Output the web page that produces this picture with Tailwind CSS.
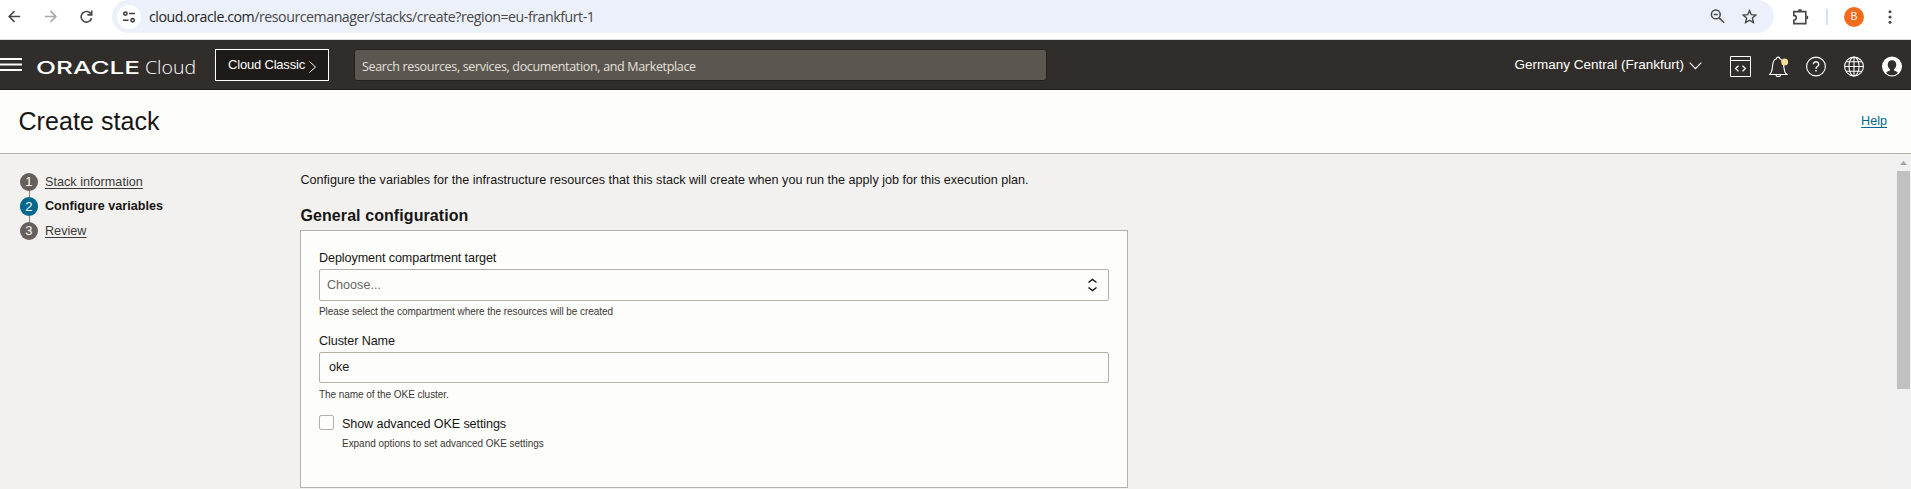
<!DOCTYPE html>
<html lang="en">
<head>
<meta charset="utf-8">
<title>Create stack</title>
<script src="https://cdn.jsdelivr.net/npm/@tailwindcss/browser@4"></script>
</head>
<body class="h-[489px] w-[1911px] overflow-hidden bg-[#f3f1f0] font-['Liberation_Sans',Arial,sans-serif] text-[12.6px] text-[#161513]">
<div class="flex h-full flex-col">

  <!-- Browser toolbar -->
  <div class="flex h-[40px] shrink-0 items-start border-b border-[#dadce0] bg-white">
    <div class="flex h-[33px] w-[112px] shrink-0 items-center pl-2">
      <svg class="mr-[23px] h-[13px] w-[13px] shrink-0" viewBox="0 0 13 13" fill="none" stroke="#474747" stroke-width="1.6"><path d="M12.2 6.5H1.2M6.5 1.1 1.1 6.5l5.4 5.4"/></svg>
      <svg class="mr-[23px] h-[13px] w-[13px] shrink-0" viewBox="0 0 13 13" fill="none" stroke="#a8a8a8" stroke-width="1.6"><path d="M.8 6.5h11M6.5 1.1l5.4 5.4-5.4 5.4"/></svg>
      <svg class="h-[13px] w-[13px] shrink-0" viewBox="0 0 13 13" fill="none" stroke="#474747" stroke-width="1.6"><path d="M11.2 4.4A5.3 5.3 0 1 0 11.6 8M11.7.6v4.3H7.4"/></svg>
    </div>
    <div class="flex h-[33px] w-[1662px] shrink-0 items-center rounded-r-full rounded-l-full bg-[#ecf0fa] pl-[5px]">
      <div class="flex h-6 w-6 shrink-0 items-center justify-center rounded-full bg-white">
        <svg class="h-[12px] w-[12px]" viewBox="0 0 12 12" fill="none" stroke="#3c3c3c" stroke-width="1.5"><circle cx="2.4" cy="2.6" r="1.7"/><path d="M6 2.6h6M0 9.2h5.6"/><circle cx="9.6" cy="9.2" r="1.7"/></svg>
      </div>
      <div class="ml-2 flex-1 font-['Open_Sans','Noto_Sans',sans-serif] text-[14.2px] tracking-[-0.47px] whitespace-nowrap text-[#474747]"><span class="text-[#1f1f1f]">cloud.oracle.com</span>/resourcemanager/stacks/create?region=eu-frankfurt-1</div>
      <svg class="mr-[17px] h-[15px] w-[15px] shrink-0" viewBox="0 0 15 15" fill="none" stroke="#474747" stroke-width="1.5"><circle cx="5.8" cy="5.4" r="4.4"/><path d="m9 8.6 5.2 5.2M3.8 5.4h4"/></svg>
      <svg class="mr-[17px] h-[15px] w-[15px] shrink-0" viewBox="0 0 15 15" fill="none" stroke="#474747" stroke-width="1.4"><path d="m7.5 1.6 1.8 4.1 4.5.4-3.4 3 1 4.4-3.900-2.300-3.900 2.300 1-4.400-3.400-3 4.500-.4z"/></svg>
    </div>
    <div class="flex h-[33px] flex-1 items-center">
      <svg class="ml-[18px] h-[17px] w-[17px] shrink-0" viewBox="0 0 17 17" fill="none" stroke="#474747" stroke-width="1.6"><path d="M1.800 3.600h12v12h-12v-3.400a2.300 2.300 0 0 0 0-4.800z"/><path fill="#474747" stroke="none" d="M6 3a2 2 0 0 1 4 0zM14.400 7.600a2 2 0 0 1 0 4z"/></svg>
      <div class="ml-[17px] h-4 w-[2px] bg-[#d3e3fd]"></div>
      <div class="ml-4 flex h-5 w-5 items-center justify-center rounded-full bg-[#f26b1d] text-[10px] text-white">B</div>
      <svg class="ml-6 h-[14px] w-[4px]" viewBox="0 0 4 14" fill="#474747"><circle cx="2" cy="1.700" r="1.500"/><circle cx="2" cy="7" r="1.500"/><circle cx="2" cy="12.300" r="1.500"/></svg>
    </div>
  </div>

  <!-- Console header -->
  <header class="flex h-[50px] shrink-0 items-center border-b border-[#1f1c19] bg-[#312d2a] text-white">
    <svg class="h-[13px] w-[22px] shrink-0" viewBox="0 0 22 13" fill="#fff"><path d="M0 0h22v2H0zM0 5.500h22v2H0zM0 11h22v2H0z"/></svg>
    <svg class="mt-[7px] ml-[14px] h-[24px] w-[170px] shrink-0 overflow-visible" viewBox="0 0 170 24" fill="#fff"><text x="0" y="18" font-family="Inter" font-weight="500" font-size="17.500" textLength="104" lengthAdjust="spacingAndGlyphs">ORACLE</text><text x="109" y="18" font-family="Open Sans" font-weight="300" font-size="19" textLength="51" lengthAdjust="spacingAndGlyphs">Cloud</text></svg>
    <div class="mt-px ml-[9px] flex h-[32px] w-[114px] shrink-0 items-center border border-white bg-[#1e1a17] pl-[12px] text-[13px] tracking-[-0.19px] whitespace-nowrap">Cloud Classic
      <svg class="mt-[3px] ml-[4px] h-[12px] w-[7px]" viewBox="0 0 7 12" fill="none" stroke="#fff" stroke-width="1"><path d="m.5.5 6 5.500-6 5.500"/></svg>
    </div>
    <div class="mt-px ml-[25px] flex h-[32px] w-[693px] shrink-0 items-center rounded-[3px] border border-[#24211e] bg-[#5b564f] pt-[4px] pl-[7px] font-['Open_Sans','Noto_Sans',sans-serif] text-[12.500px] tracking-[-0.33px] whitespace-nowrap text-[#e3e0dc]">Search resources, services, documentation, and Marketplace</div>
    <div class="flex-1"></div>
    <div class="mt-px mr-[28px] flex items-center gap-[5px] text-[13.5px] whitespace-nowrap">Germany Central (Frankfurt)
      <svg class="mt-px h-[8px] w-[13px]" viewBox="0 0 13 8" fill="none" stroke="#fff" stroke-width="1.200"><path d="m.7.7 5.800 6 5.800-6"/></svg>
    </div>
    <div class="mt-[3px] mr-[9px] flex items-center gap-[18px]">
      <svg class="h-[21px] w-[21px]" viewBox="0 0 21 21" fill="none" stroke="#fff" stroke-width="1"><path d="M.5.500h20v20H.5zM.5 4.500h20"/><path stroke-width="1.300" d="M8.500 9.700l-3 2.800 3 2.800M12.500 9.700l3 2.800-3 2.800"/></svg>
      <svg class="h-[21px] w-[19px]" viewBox="0 0 19 21" fill="none" stroke="#fff" stroke-width="1.100"><path d="M.6 18.500h17.200c-2-1.500-2.500-3-2.800-6.500-.3-5-1.500-8.500-4.200-9.200a1.700 1.700 0 0 0-3.400 0C4.700 3.500 3.500 7 3.300 12c-.3 3.500-.9 5-2.700 6.500zM7 19a2.300 1.600 0 0 0 4.600 0"/><circle cx="15.700" cy="6" r="3.500" fill="#f6dc9c" stroke="none"/></svg>
      <svg class="h-[21px] w-[20px]" viewBox="0 0 20 21" fill="none" stroke="#fff" stroke-width="1.100"><circle cx="10" cy="10.500" r="9.400"/><path stroke-width="1.400" d="M7.300 8.300a2.700 2.500 0 1 1 4.200 2.100c-1 .7-1.500 1.100-1.500 2.300M10 14v1.500"/></svg>
      <svg class="h-[21px] w-[20px]" viewBox="0 0 20 21" fill="none" stroke="#fff" stroke-width="1.100"><circle cx="10" cy="10.500" r="9.400"/><ellipse cx="10" cy="10.500" rx="5" ry="9.400"/><path d="M10 1v19M.6 10.500h18.800M2 5.700h16M2 15.300h16"/></svg>
      <svg class="h-[21px] w-[20px]" viewBox="0 0 20 21"><circle cx="10" cy="10.500" r="10" fill="#fff"/><path fill="#312d2a" d="M10 4.200c2.800 0 4.300 2 4.300 4.400 0 2-.9 3.700-2.200 4.700v1.300c1.200.5 2.700 1 3.800 2.100-1.500 1.600-3.500 2.600-5.900 2.600s-4.400-1-5.900-2.600c1.100-1.100 2.600-1.600 3.800-2.100v-1.300c-1.300-1-2.200-2.700-2.200-4.700 0-2.400 1.500-4.400 4.300-4.400z"/></svg>
    </div>
  </header>

  <!-- Page title -->
  <div class="flex h-[64px] shrink-0 items-center justify-between border-b border-[#b5b2ae] bg-[#fdfdfb] pr-[24px] pl-[18.500px]">
    <h1 class="text-[25px] leading-none tracking-[0.06px] whitespace-nowrap">Create stack</h1>
    <a class="text-[12.6px] leading-none text-[#00688c] underline underline-offset-2">Help</a>
  </div>

  <!-- Content -->
  <div class="flex min-h-0 flex-1">
    <nav class="w-[281px] shrink-0 pt-[19px] pl-5">
      <ol class="tracking-[0.03px] whitespace-nowrap text-[#3b3835]">
        <li class="flex h-[18px] items-center gap-[7px]"><span class="flex h-[18px] w-[18px] items-center justify-center rounded-full bg-[#665f5b] text-[13px] text-white">1</span><a class="underline underline-offset-2">Stack information</a></li>
        <li class="ml-[9px] h-[6px] w-px bg-[#8b8580]"></li>
        <li class="flex h-[19px] items-center gap-[7px] font-bold text-[#161513]"><span class="flex h-[19px] w-[18px] items-center justify-center rounded-full bg-[#00688c] text-[13px] font-normal text-white">2</span>Configure variables</li>
        <li class="ml-[9px] h-[6px] w-px bg-[#8b8580]"></li>
        <li class="flex h-[18px] items-center gap-[7px]"><span class="flex h-[18px] w-[18px] items-center justify-center rounded-full bg-[#665f5b] text-[13px] text-white">3</span><a class="underline underline-offset-2">Review</a></li>
      </ol>
    </nav>

    <main class="flex flex-1 flex-col items-start pl-[19px] whitespace-nowrap">
      <p class="mt-[18px] h-4 pl-[0.5px] leading-4">Configure the variables for the infrastructure resources that this stack will create when you run the apply job for this execution plan.</p>
      <h2 class="mt-[18px] h-5 pl-[0.5px] text-[16px] leading-5 font-bold tracking-[0.08px]">General configuration</h2>
      <section class="mt-[4px] h-[258px] w-[828px] border border-[#b5b0ab] bg-[#fdfdfb] px-[18px] pt-[19px]">
        <label class="block h-4 leading-4 tracking-[-0.09px]">Deployment compartment target</label>
        <div class="mt-[3px] flex h-[32px] items-center justify-between rounded-[2px] border border-[#b5aea7] pr-[11px] pl-[7px] text-[#6b6662]">Choose...
          <svg class="h-[14px] w-[9px]" viewBox="0 0 9 14" fill="none" stroke="#161513" stroke-width="1.400"><path d="M.5 4.500 4.500 1.400l4 3.100M.5 9.500l4 3.100 4-3.100"/></svg>
        </div>
        <p class="mt-[5px] h-3 text-[10px] leading-3 tracking-[-0.05px] text-[#3b3835]">Please select the compartment where the resources will be created</p>
        <label class="mt-[15px] block h-4 leading-4 tracking-[-0.09px]">Cluster Name</label>
        <div class="mt-[3px] flex h-[31px] items-center rounded-[2px] border border-[#b5aea7] pl-[9px]">oke</div>
        <p class="mt-[6px] h-3 text-[10px] leading-3 tracking-[-0.05px] text-[#3b3835]">The name of the OKE cluster.</p>
        <div class="mt-[14px] flex gap-2">
          <span class="h-[15px] w-[15px] rounded-[2px] border border-[#b5b0ab]"></span>
          <div class="pt-px">
            <div class="h-4 leading-4 tracking-[-0.1px]">Show advanced OKE settings</div>
            <p class="mt-[6px] h-3 text-[10px] leading-3 tracking-[-0.04px] text-[#3b3835]">Expand options to set advanced OKE settings</p>
          </div>
        </div>
      </section>
    </main>

    <!-- Scrollbar -->
    <div class="flex w-4 shrink-0 flex-col items-center bg-[#f0f0f0] pt-[7px]">
      <svg class="h-[4px] w-[7px]" viewBox="0 0 7 4" fill="#a3a3a3"><path d="M3.500 0 7 4H0z"/></svg>
      <div class="mt-[6px] h-[218px] w-[13px] bg-[#c1c1c1]"></div>
    </div>
  </div>
</div>
</body>
</html>
